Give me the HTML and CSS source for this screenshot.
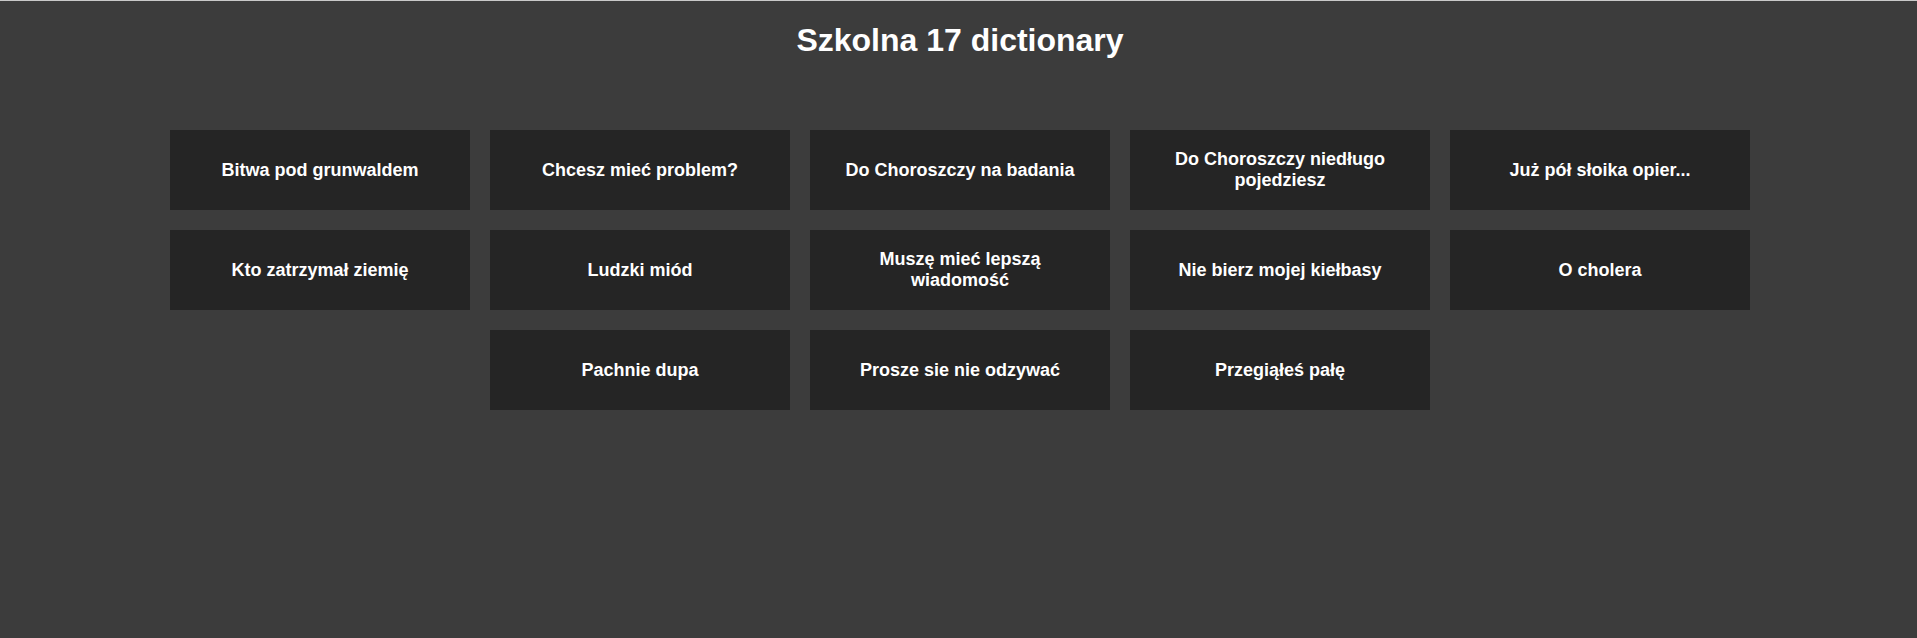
FILE: index.html
```html
<!DOCTYPE html>
<html lang="pl">
<head>
<meta charset="utf-8">
<title>Szkolna 17 dictionary</title>
<link rel="stylesheet" href="styles.css">
</head>
<body>
<header class="header">
  <h1 class="title">Szkolna 17 dictionary</h1>
</header>
<main class="grid">
  <button class="tile">Bitwa pod grunwaldem</button>
  <button class="tile">Chcesz mieć problem?</button>
  <button class="tile">Do Choroszczy na badania</button>
  <button class="tile">Do Choroszczy niedługo pojedziesz</button>
  <button class="tile">Już pół słoika opier...</button>
  <button class="tile">Kto zatrzymał ziemię</button>
  <button class="tile">Ludzki miód</button>
  <button class="tile">Muszę mieć lepszą wiadomość</button>
  <button class="tile">Nie bierz mojej kiełbasy</button>
  <button class="tile">O cholera</button>
  <button class="tile">Pachnie dupa</button>
  <button class="tile">Prosze sie nie odzywać</button>
  <button class="tile">Przegiąłeś pałę</button>
</main>
</body>
</html>
```
FILE: styles.css
```css
html, body {
  margin: 0;
  padding: 0;
}
body {
  background: #3c3c3c;
  border-top: 1px solid #c9c9c9;
  min-height: 637px;
  box-sizing: border-box;
  padding-left: 3px;
  font-family: "Liberation Sans", Arial, sans-serif;
  color: #ffffff;
}
.header {
  padding-top: 19px;
}
.title {
  margin: 0;
  text-align: center;
  font-size: 32px;
  line-height: 40px;
  font-weight: bold;
  color: #ffffff;
}
.grid {
  display: flex;
  flex-wrap: wrap;
  justify-content: center;
  gap: 20px;
  width: 1580px;
  margin: 70px auto 0;
}
.tile {
  width: 300px;
  height: 80px;
  box-sizing: border-box;
  padding: 0 20px;
  border: none;
  background: #252525;
  color: #ffffff;
  font-family: "Liberation Sans", Arial, sans-serif;
  font-size: 18px;
  font-weight: bold;
  line-height: normal;
  text-align: center;
  display: flex;
  align-items: center;
  justify-content: center;
  cursor: pointer;
}
```
